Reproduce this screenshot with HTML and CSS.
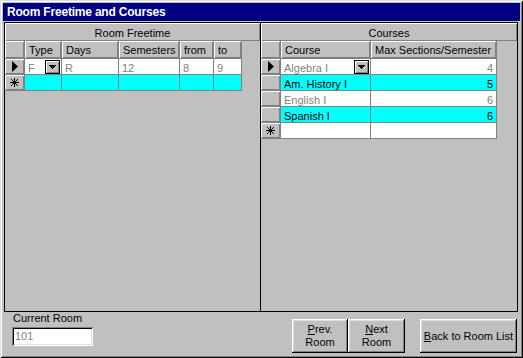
FILE: index.html
```html
<!DOCTYPE html>
<html>
<head>
<meta charset="utf-8">
<link rel="stylesheet" href="styles.css">
</head>
<body>
<div class="window">
  <div class="titlebar">Room Freetime and Courses</div>
  <div class="panes">
    <div class="pane pane-left">
      <div class="pane-header">Room Freetime</div>
      <div class="grid grid-free">
        <div class="hd sel"></div>
        <div class="hd">Type</div>
        <div class="hd">Days</div>
        <div class="hd">Semesters</div>
        <div class="hd">from</div>
        <div class="hd">to</div>

        <div class="sel"><svg width="6" height="11" viewBox="0 0 6 11"><polygon points="0,0 6,5.5 0,11" fill="#000"/></svg></div>
        <div class="cell combo"><span>F</span><span class="dd"><svg width="7" height="4" viewBox="0 0 7 4" shape-rendering="crispEdges"><rect x="0" y="0" width="7" height="1"/><rect x="1" y="1" width="5" height="1"/><rect x="2" y="2" width="3" height="1"/><rect x="3" y="3" width="1" height="1"/></svg></span></div>
        <div class="cell">R</div>
        <div class="cell">12</div>
        <div class="cell">8</div>
        <div class="cell">9</div>

        <div class="sel"><svg width="9" height="9" viewBox="0 0 9 9" shape-rendering="crispEdges"><rect x="4" y="0" width="1" height="9"/><rect x="0" y="4" width="9" height="1"/><rect x="1" y="1" width="1" height="1"/><rect x="2" y="2" width="1" height="1"/><rect x="3" y="3" width="3" height="3"/><rect x="6" y="6" width="1" height="1"/><rect x="7" y="7" width="1" height="1"/><rect x="7" y="1" width="1" height="1"/><rect x="6" y="2" width="1" height="1"/><rect x="2" y="6" width="1" height="1"/><rect x="1" y="7" width="1" height="1"/></svg></div>
        <div class="cell hl"></div>
        <div class="cell hl"></div>
        <div class="cell hl"></div>
        <div class="cell hl"></div>
        <div class="cell hl"></div>
      </div>
    </div>
    <div class="pane pane-right">
      <div class="pane-header">Courses</div>
      <div class="grid grid-courses">
        <div class="hd sel"></div>
        <div class="hd">Course</div>
        <div class="hd">Max Sections/Semester</div>

        <div class="sel"><svg width="6" height="11" viewBox="0 0 6 11"><polygon points="0,0 6,5.5 0,11" fill="#000"/></svg></div>
        <div class="cell combo"><span>Algebra I</span><span class="dd"><svg width="7" height="4" viewBox="0 0 7 4" shape-rendering="crispEdges"><rect x="0" y="0" width="7" height="1"/><rect x="1" y="1" width="5" height="1"/><rect x="2" y="2" width="3" height="1"/><rect x="3" y="3" width="1" height="1"/></svg></span></div>
        <div class="cell num">4</div>

        <div class="sel"></div>
        <div class="cell hl">Am. History I</div>
        <div class="cell hl num">5</div>

        <div class="sel"></div>
        <div class="cell">English I</div>
        <div class="cell num">6</div>

        <div class="sel"></div>
        <div class="cell hl">Spanish I</div>
        <div class="cell hl num">6</div>

        <div class="sel"><svg width="9" height="9" viewBox="0 0 9 9" shape-rendering="crispEdges"><rect x="4" y="0" width="1" height="9"/><rect x="0" y="4" width="9" height="1"/><rect x="1" y="1" width="1" height="1"/><rect x="2" y="2" width="1" height="1"/><rect x="3" y="3" width="3" height="3"/><rect x="6" y="6" width="1" height="1"/><rect x="7" y="7" width="1" height="1"/><rect x="7" y="1" width="1" height="1"/><rect x="6" y="2" width="1" height="1"/><rect x="2" y="6" width="1" height="1"/><rect x="1" y="7" width="1" height="1"/></svg></div>
        <div class="cell"></div>
        <div class="cell"></div>
      </div>
    </div>
  </div>
  <div class="footer">
    <div class="room-field">
      <div class="label">Current Room</div>
      <div class="textbox">101</div>
    </div>
    <div class="buttons">
      <div class="btn btn-prev"><span><u>P</u>rev.</span><span>Room</span></div>
      <div class="btn btn-next"><span><u>N</u>ext</span><span>Room</span></div>
      <div class="btn btn-back"><span><u>B</u>ack to Room List</span></div>
    </div>
  </div>
</div>
</body>
</html>
```

FILE: styles.css
```css
* {
  box-sizing: border-box;
}

html, body {
  margin: 0;
  padding: 0;
}

body {
  width: 523px;
  height: 358px;
  overflow: hidden;
  background: #c0c0c0;
  font-family: "Liberation Sans", Arial, sans-serif;
  font-size: 11px;
  color: #000;
}

.window {
  width: 523px;
  height: 358px;
  padding: 3px;
  display: flex;
  flex-direction: column;
  background: #c0c0c0;
  box-shadow: inset 1px 1px #dfdfdf, inset -1px -1px #000, inset 2px 2px #fff, inset -2px -2px #808080;
}

.titlebar {
  height: 18px;
  flex: none;
  background: #000080;
  color: #fff;
  font-weight: bold;
  font-size: 12px;
  line-height: 17px;
  padding: 1px 0 0 4px;
  letter-spacing: -0.2px;
  white-space: nowrap;
}

.panes {
  flex: none;
  margin: 1px 2px 0 1px;
  height: 290px;
  border: 1px solid #000;
  display: flex;
}

.pane-left {
  width: 256px;
  border-right: 1px solid #000;
}

.pane-right {
  flex: 1;
}

.pane-header {
  height: 18px;
  padding-top: 2px;
  line-height: 16px;
  text-align: center;
  box-shadow: inset 1px 1px #fff, inset -1px -1px #808080;
}

.grid {
  display: grid;
  justify-content: start;
  grid-auto-rows: 16px;
}

.grid-free {
  grid-template-columns: 20px 37px 57px 61px 34px 28px;
  grid-template-rows: 18px;
}

.grid-courses {
  grid-template-columns: 20px 90px 126px;
  grid-template-rows: 18px;
}

.grid > div {
  border-right: 1px solid #808080;
  border-bottom: 1px solid #808080;
  white-space: nowrap;
  overflow: hidden;
}

.hd {
  background: #c0c0c0;
  box-shadow: inset 1px 1px #fff, inset -1px -1px #808080;
  padding: 1px 0 0 4px;
  line-height: 17px;
}

.sel {
  background: #c0c0c0;
  box-shadow: inset 1px 1px #fff, inset -1px -1px #808080;
  display: flex;
  align-items: center;
  justify-content: center;
}

.sel svg {
  display: block;
  fill: #000;
}

.cell {
  background: #fff;
  color: #808080;
  padding: 2px 3px 0 3px;
  line-height: 14px;
}

.cell.hl {
  background: #00ffff;
  color: #000;
}

.cell.num {
  text-align: right;
}

.combo {
  display: flex;
  justify-content: space-between;
  align-items: flex-start;
  padding-right: 1px;
}

.dd {
  width: 15px;
  height: 14px;
  margin-top: -1px;
  background: #c0c0c0;
  border: 1px solid #000;
  border-right-color: #000;
  box-shadow: inset 1px 1px #fff, inset -1px -1px #808080;
  display: flex;
  align-items: center;
  justify-content: center;
}

.dd svg {
  display: block;
  fill: #000;
}

.footer {
  flex: 1;
  display: flex;
  align-items: flex-start;
}

.room-field {
  margin-left: 9px;
  display: flex;
  flex-direction: column;
}

.label {
  line-height: 13px;
  padding-left: 1px;
}

.textbox {
  margin-top: 2px;
  width: 81px;
  height: 19px;
  background: #fff;
  color: #808080;
  padding: 2px 3px 0 3px;
  line-height: 15px;
  box-shadow: inset 1px 1px #808080, inset -1px -1px #fff, inset 2px 2px #000, inset -2px -2px #dfdfdf;
}

.buttons {
  margin-left: auto;
  margin-right: 3px;
  margin-top: 7px;
  display: flex;
}

.btn {
  height: 34px;
  display: flex;
  flex-direction: column;
  align-items: center;
  justify-content: center;
  line-height: 13px;
  box-shadow: inset -1px -1px #000, inset 1px 1px #fff, inset -2px -2px #808080, inset 2px 2px #dfdfdf;
  background: #c0c0c0;
}

.btn-prev {
  width: 56px;
}

.btn-next {
  width: 57px;
}

.btn-back {
  width: 97px;
  margin-left: 15px;
}
```
